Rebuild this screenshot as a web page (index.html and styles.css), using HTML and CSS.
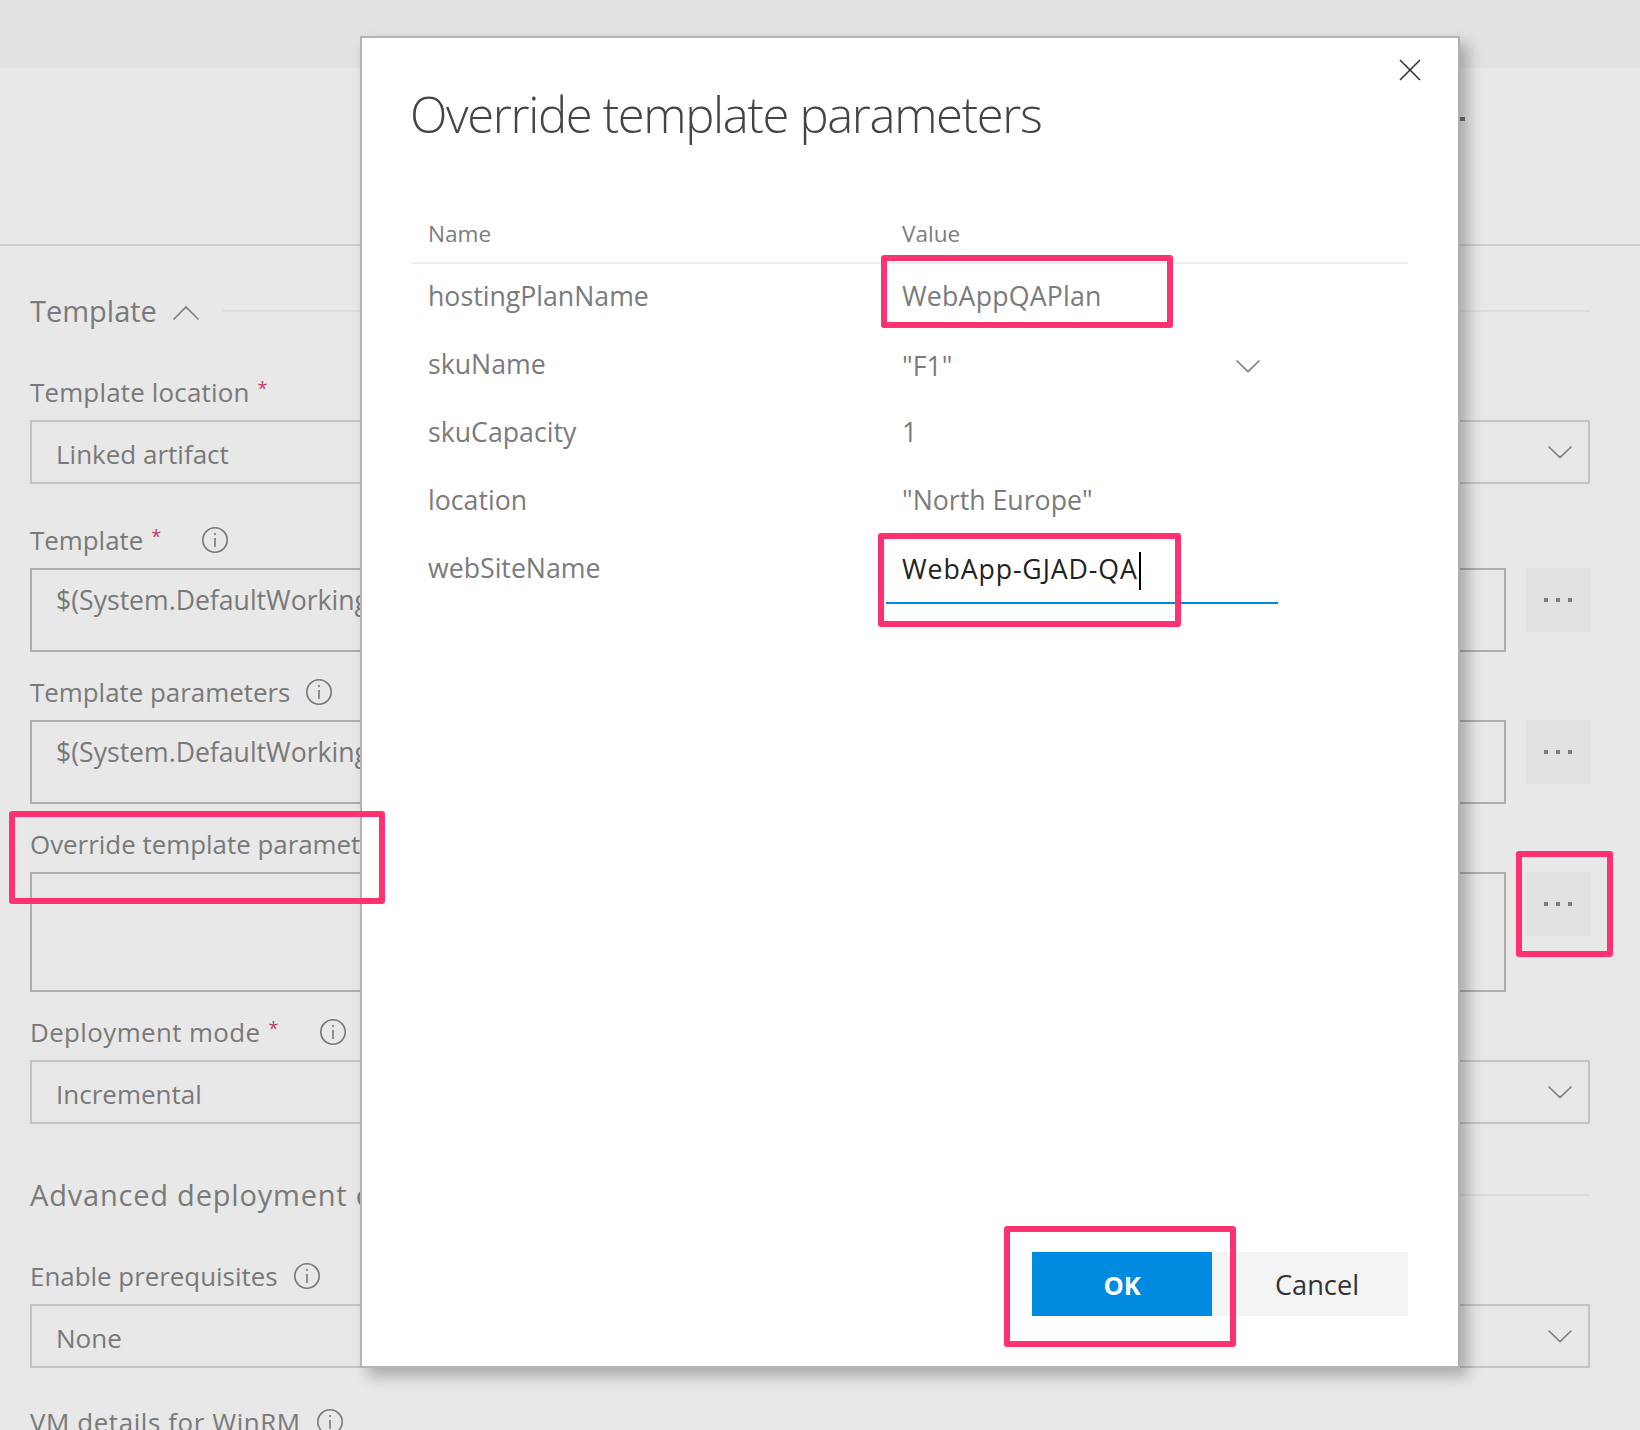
FILE: index.html
```html
<!DOCTYPE html>
<html lang="en">
<head>
<meta charset="utf-8">
<title>Override template parameters</title>
<link rel="stylesheet" href="styles.css">
</head>
<body>
<div class="page">
  <div class="topbar"></div>
  <header class="header"><span class="header-dot"></span></header>
  <main class="form">
    <div class="section section-first">
      <h2 class="section-title">Template</h2>
      <svg class="chev-up" width="28" height="16" viewBox="0 0 28 16"><polyline points="1.5,14.5 14,2 26.5,14.5"/></svg>
      <span class="section-line"></span>
    </div>

    <div class="field gap-l">
      <div class="label track-s">Template location<span class="req">*</span></div>
      <div class="select"><span>Linked artifact</span><svg class="chev" width="26" height="14" viewBox="0 0 26 14"><polyline points="1.5,1.5 13,12.5 24.5,1.5"/></svg></div>
    </div>

    <div class="field gap-m">
      <div class="label">Template<span class="req req-info">*</span><svg class="info" width="28" height="28" viewBox="0 0 28 28"><circle cx="14" cy="14" r="12.2"/><line x1="14" y1="12" x2="14" y2="21"/><line x1="14" y1="7" x2="14" y2="9"/></svg></div>
      <div class="control-row">
        <div class="textbox"><span class="clip-text">$(System.DefaultWorkingDirectory)/WebApp/ARM/WebSite.json</span></div>
        <div class="more"><i></i><i></i><i></i></div>
      </div>
    </div>

    <div class="field gap-m">
      <div class="label">Template parameters<svg class="info" width="28" height="28" viewBox="0 0 28 28"><circle cx="14" cy="14" r="12.2"/><line x1="14" y1="12" x2="14" y2="21"/><line x1="14" y1="7" x2="14" y2="9"/></svg></div>
      <div class="control-row">
        <div class="textbox"><span class="clip-text">$(System.DefaultWorkingDirectory)/WebApp/ARM/WebSite.parameters.json</span></div>
        <div class="more"><i></i><i></i><i></i></div>
      </div>
    </div>

    <div class="field gap-m">
      <div class="label">Override template parameters</div>
      <div class="control-row">
        <div class="textbox textbox-tall"></div>
        <div class="more"><i></i><i></i><i></i></div>
      </div>
    </div>

    <div class="field">
      <div class="label track-m">Deployment mode<span class="req req-info">*</span><svg class="info" width="28" height="28" viewBox="0 0 28 28"><circle cx="14" cy="14" r="12.2"/><line x1="14" y1="12" x2="14" y2="21"/><line x1="14" y1="7" x2="14" y2="9"/></svg></div>
      <div class="select"><span>Incremental</span><svg class="chev" width="26" height="14" viewBox="0 0 26 14"><polyline points="1.5,1.5 13,12.5 24.5,1.5"/></svg></div>
    </div>

    <div class="section section-adv">
      <h2 class="section-title title-track">Advanced deployment options</h2>
      <span class="section-line"></span>
    </div>

    <div class="field gap-last">
      <div class="label">Enable prerequisites<svg class="info" width="28" height="28" viewBox="0 0 28 28"><circle cx="14" cy="14" r="12.2"/><line x1="14" y1="12" x2="14" y2="21"/><line x1="14" y1="7" x2="14" y2="9"/></svg></div>
      <div class="select"><span>None</span><svg class="chev" width="26" height="14" viewBox="0 0 26 14"><polyline points="1.5,1.5 13,12.5 24.5,1.5"/></svg></div>
    </div>

    <div class="field">
      <div class="label track-l">VM details for WinRM<svg class="info" width="28" height="28" viewBox="0 0 28 28"><circle cx="14" cy="14" r="12.2"/><line x1="14" y1="12" x2="14" y2="21"/><line x1="14" y1="7" x2="14" y2="9"/></svg></div>
    </div>
  </main>

  <section class="modal">
    <svg class="close" width="24" height="24" viewBox="0 0 24 24"><line x1="2" y1="2" x2="22" y2="22"/><line x1="22" y1="2" x2="2" y2="22"/></svg>
    <h1 class="modal-title">Override template parameters</h1>
    <div class="param-table">
      <div class="param-head">Name</div>
      <div class="param-head">Value</div>
      <div class="param-name">hostingPlanName</div>
      <div class="param-value track-s">WebAppQAPlan</div>
      <div class="param-name">skuName</div>
      <div class="param-value param-select"><span>"F1"</span><svg class="chev" width="26" height="14" viewBox="0 0 26 14"><polyline points="1.5,1.5 13,12.5 24.5,1.5"/></svg></div>
      <div class="param-name">skuCapacity</div>
      <div class="param-value">1</div>
      <div class="param-name">location</div>
      <div class="param-value">"North Europe"</div>
      <div class="param-name">webSiteName</div>
      <div class="param-value param-active"><span class="active-text">WebApp-GJAD-QA</span><span class="caret"></span></div>
    </div>
    <div class="modal-footer">
      <button class="btn btn-ok">OK</button>
      <button class="btn btn-cancel">Cancel</button>
    </div>
  </section>

  <div class="mark mark-label"></div>
  <div class="mark mark-more"></div>
  <div class="mark mark-plan"></div>
  <div class="mark mark-site"></div>
  <div class="mark mark-ok"></div>
</div>
</body>
</html>
```

FILE: styles.css
```css
* { box-sizing: border-box; }
html, body { margin: 0; padding: 0; }
body { background: #e8e8e8; font-family: "Open Sans", "Liberation Sans", sans-serif; color: #797979; }
.page { position: relative; width: 1640px; height: 1430px; overflow: hidden; background: #e8e8e8; }
.topbar { height: 68px; background: #e2e2e2; }
.header { height: 178px; border-bottom: 2px solid #cdcdcd; display: flex; justify-content: flex-end; align-items: flex-start; padding: 49px 175px 0 0; }
.header-dot { width: 5px; height: 4px; background: #6f6f80; }
.form { padding: 43px 50px 0 30px; }
.section { display: flex; align-items: center; height: 44px; }
.section-title { margin: 0; font-size: 29px; font-weight: 400; line-height: 44px; white-space: nowrap; color: #7a7a7a; }
.title-track { letter-spacing: .8px; }
.chev-up { margin: 3px 0 0 15px; flex: none; }
.chev-up polyline, .chev polyline { fill: none; stroke: #808080; stroke-width: 1.7; }
.section-line { flex: 1; height: 2px; background: #dcdcdc; margin-left: 23px; }
.section-first { margin-bottom: 51px; }
.section-adv { margin-top: 49px; margin-bottom: 51px; }
.field.gap-l { margin-bottom: 48px; }
.field.gap-m { margin-bottom: 32px; }
.field.gap-last { margin-bottom: 46px; }
.label { height: 36px; padding-bottom: 21px; line-height: 36px; font-size: 25.9px; display: flex; align-items: center; white-space: nowrap; }
.track-s { letter-spacing: .2px; }
.track-m { letter-spacing: .4px; }
.track-l { letter-spacing: .6px; }
.req { font-size: 18px; color: #b8406f; margin-left: 8px; align-self: flex-start; line-height: 8px; }
.req-info { margin-right: 25px; }
.info { margin-left: 15px; flex: none; }
.info circle, .info line { fill: none; stroke: #777; stroke-width: 1.6; }
.select { height: 64px; border: 2px solid #c4c4c4; padding: 4px 15px 0 24px; display: flex; align-items: center; justify-content: space-between; font-size: 26px; }
.select .chev { margin-top: -5px; }
.control-row { display: flex; gap: 20px; align-items: flex-start; }
.textbox { flex: 1; min-width: 0; height: 84px; border: 2px solid #aeaeae; padding: 12px 24px 0; font-size: 26.6px; line-height: 36px; overflow: hidden; white-space: nowrap; }
.textbox-tall { height: 120px; }
.more { width: 64px; height: 64px; flex: none; background: #e2e2e2; display: flex; align-items: center; justify-content: center; gap: 8px; }
.more i { width: 4px; height: 4px; background: #7d7d7d; display: block; }

.modal { position: absolute; left: 360px; top: 36px; width: 1100px; height: 1332px; background: #fff; border: 2px solid #b4b4b4; border-right-color: #b0b0b0; box-shadow: 8px 8px 14px rgba(0,0,0,.27); display: flex; flex-direction: column; padding: 0 50px; }
.close { position: absolute; right: 36px; top: 20px; }
.close line { stroke: #333; stroke-width: 1.6; }
.modal-title { margin: 42px 0 0 -2px; font-size: 49px; line-height: 68px; font-weight: 300; letter-spacing: -1.35px; color: #444; white-space: nowrap; }
.param-table { display: grid; grid-template-columns: 474px 1fr; grid-template-rows: 64px; grid-auto-rows: 68px; margin-top: 52px; }
.param-head { font-size: 22.6px; color: #7d7d7d; padding: 12px 0 0 16px; line-height: 44px; border-bottom: 2px solid #eee; }
.param-name, .param-value { font-size: 26.7px; line-height: 64px; color: #7b7b7b; padding-left: 16px; white-space: nowrap; }
.param-select { display: flex; align-items: center; justify-content: space-between; width: 393px; padding-right: 18px; }
.param-active { width: 392px; height: 68px; color: #222; border-bottom: 2px solid #0089e0; letter-spacing: .9px; line-height: 66px; display: flex; }
.caret { width: 2px; height: 38px; background: #000; margin: 16px 0 0 1px; }
.modal-footer { margin-top: auto; margin-bottom: 50px; display: flex; justify-content: flex-end; }
.btn { height: 64px; border: 0; padding-top: 2px; font-family: inherit; font-size: 25.5px; cursor: pointer; }
.btn-ok { width: 180px; background: #008ae0; color: #fff; font-weight: 700; }
.btn-cancel { width: 196px; padding-left: 20px; font-size: 27.2px; background: #f4f4f4; color: #333; }

.mark { position: absolute; border: 6px solid #ff3170; border-radius: 3px; }
.mark-label { left: 9px; top: 811px; width: 376px; height: 93px; }
.mark-more { left: 1516px; top: 851px; width: 97px; height: 106px; }
.mark-plan { left: 881px; top: 255px; width: 292px; height: 73px; }
.mark-site { left: 878px; top: 533px; width: 303px; height: 94px; }
.mark-ok { left: 1004px; top: 1226px; width: 232px; height: 121px; }
```
